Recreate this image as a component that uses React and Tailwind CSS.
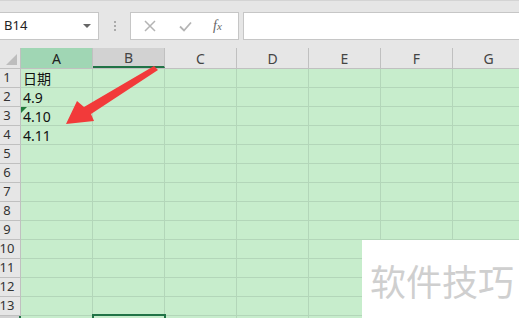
import React from "react";

const cols = ["A", "B", "C", "D", "E", "F", "G"];
const rows = [1, 2, 3, 4, 5, 6, 7, 8, 9, 10, 11, 12, 13, 14];
const values = { 1: "日期", 2: "4.9", 3: "4.10", 4: "4.11" };

export default function App() {
  return (
    <div
      className="relative w-[519px] h-[318px] overflow-hidden bg-[#e6e6e6]"
      style={{ fontFamily: '"Noto Sans", "Noto Sans CJK SC", sans-serif' }}
    >
      {/* Toolbar */}
      <div className="h-[48px] flex items-start pt-[11px] border-t border-[#d4d4d4]">
        <div className="w-[99px] h-[28px] bg-white border border-[#c6c6c6] border-l-0 flex items-center justify-between pl-[4px] pr-[7px]">
          <span className="text-[13px] text-[#222]">B14</span>
          <span className="w-0 h-0 border-l-[4px] border-r-[4px] border-t-[4px] border-l-transparent border-r-transparent border-t-[#666]"></span>
        </div>
        <div className="w-[31px] h-[28px] flex flex-col items-center justify-center gap-[2px]">
          <span className="w-[2px] h-[2px] bg-[#aaa]"></span>
          <span className="w-[2px] h-[2px] bg-[#aaa]"></span>
          <span className="w-[2px] h-[2px] bg-[#aaa]"></span>
        </div>
        <div className="w-[109px] h-[28px] bg-white border border-[#c6c6c6] flex items-center pl-[13px]">
          <svg width="12" height="12" viewBox="0 0 12 12" className="mr-[23px]">
            <path d="M1 1 L11 11 M11 1 L1 11" stroke="#b4b4b4" strokeWidth="1.5" />
          </svg>
          <svg width="13" height="11" viewBox="0 0 13 11" className="mr-[21px]">
            <path d="M1 5.5 L5 9.5 L12 1.5" stroke="#b4b4b4" strokeWidth="1.8" fill="none" />
          </svg>
          <span
            className="italic text-[14px] text-[#666] leading-none"
            style={{ fontFamily: '"Liberation Serif", serif' }}
          >
            f<span className="text-[11px]">x</span>
          </span>
        </div>
        <div className="ml-[4px] flex-1 h-[28px] bg-white border border-[#c6c6c6] border-r-0"></div>
      </div>

      {/* Column header */}
      <div className="flex h-[21px] border-b border-[#c0c0c0]">
        <div className="w-[21px] shrink-0 border-r border-[#c0c0c0] flex items-end justify-end pr-[3px] pb-[3px]">
          <svg width="11" height="11" viewBox="0 0 11 11">
            <polygon points="11,0 11,11 0,11" fill="#bdbdbd" />
          </svg>
        </div>
        {cols.map((c) => (
          <div
            key={c}
            className={
              "w-[72px] shrink-0 border-r border-[#c0c0c0] flex items-center justify-center text-[14px] " +
              (c === "A"
                ? "bg-[#a0d6b4] text-[#222]"
                : c === "B"
                ? "bg-[#d2d2d2] text-[#444] border-b-2 border-b-[#217346]"
                : "text-[#444]")
            }
          >
            {c}
          </div>
        ))}
      </div>

      {/* Rows */}
      {rows.map((r) => (
        <div key={r} className="flex h-[19px]">
          <div
            className={
              "w-[21px] shrink-0 border-b border-r border-[#c0c0c0] flex items-center justify-center pr-[6px] text-[13px] text-[#333] " +
              (r === 14 ? "bg-[#d2d2d2] border-r-2 border-r-[#217346]" : "")
            }
          >
            {r}
          </div>
          {cols.map((c) => (
            <div
              key={c}
              className="relative w-[72px] shrink-0 bg-[#c7edcc] border-b border-r border-[#b3d6b9] flex items-center pl-[2px] text-[14px] text-[#111]"
            >
              {c === "A" && r === 3 && (
                <span className="absolute left-0 top-0 w-0 h-0 border-t-[6px] border-r-[6px] border-t-[#1e7b3a] border-r-transparent"></span>
              )}
              {c === "A" ? values[r] : null}
            </div>
          ))}
        </div>
      ))}

      {/* Selected cell B14 */}
      <div className="absolute left-[92px] top-[314px] w-[74px] h-[10px] border-2 border-[#217346]"></div>

      {/* Red arrow */}
      <svg className="absolute left-0 top-0" width="519" height="318">
        <polygon points="154,66 158,70 91,114 94,121 66,124 77,101 84,107" fill="#f23a3a" />
      </svg>

      {/* Watermark */}
      <div className="absolute left-[362px] top-[240px] w-[160px] h-[80px] bg-white flex items-center justify-center">
        <span
          className="text-[36px] text-[#cfcfcf]"
          style={{ fontFamily: '"Noto Sans CJK SC", sans-serif' }}
        >
          软件技巧
        </span>
      </div>
    </div>
  );
}
